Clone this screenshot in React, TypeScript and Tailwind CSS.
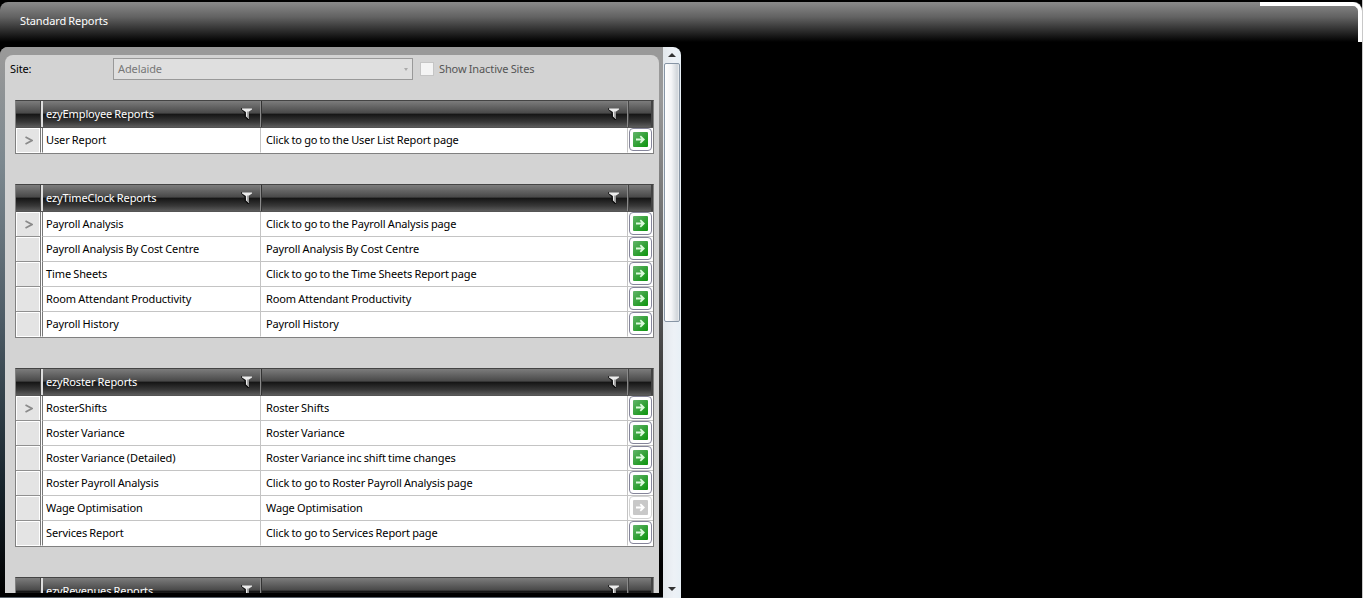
import React from "react";

type Row = { name: string; text: string; off?: boolean };
type Group = { title: string; rows: Row[] };

const groups: Group[] = [
  { title: "ezyEmployee Reports", rows: [{ name: "User Report", text: "Click to go to the User List Report page" }] },
  {
    title: "ezyTimeClock Reports",
    rows: [
      { name: "Payroll Analysis", text: "Click to go to the Payroll Analysis page" },
      { name: "Payroll Analysis By Cost Centre", text: "Payroll Analysis By Cost Centre" },
      { name: "Time Sheets", text: "Click to go to the Time Sheets Report page" },
      { name: "Room Attendant Productivity", text: "Room Attendant Productivity" },
      { name: "Payroll History", text: "Payroll History" },
    ],
  },
  {
    title: "ezyRoster Reports",
    rows: [
      { name: "RosterShifts", text: "Roster Shifts" },
      { name: "Roster Variance", text: "Roster Variance" },
      { name: "Roster Variance (Detailed)", text: "Roster Variance inc shift time changes" },
      { name: "Roster Payroll Analysis", text: "Click to go to Roster Payroll Analysis page" },
      { name: "Wage Optimisation", text: "Wage Optimisation", off: true },
      { name: "Services Report", text: "Click to go to Services Report page" },
    ],
  },
  { title: "ezyRevenues Reports", rows: [] },
];

const glossy = "bg-[linear-gradient(180deg,#7c7c7c_0%,#484848_47%,#141414_50%,#383838_80%,#5c5c5c_100%)]";

function Funnel() {
  return (
    <svg width="12" height="13" viewBox="0 0 12 13" className="shrink-0">
      <path d="M0 1.5L4 5.5v4L7.5 13V5" fill="none" stroke="#111" strokeWidth="1.2" />
      <path d="M1 1.5h10v1L8 4.5v7.5L5 9.5V5L1 2.5z" fill="#ececec" />
      <path d="M6.2 4.5H8V12L6.2 10.5z" fill="#9a9a9a" />
    </svg>
  );
}

function GoButton({ off }: { off?: boolean }) {
  return (
    <button
      className={`flex h-[23px] w-[23px] items-center justify-center rounded-[4px] border bg-white ${off ? "border-[#d2d2d2]" : "border-[#85859a]"}`}
    >
      <svg width="15" height="15" viewBox="0 0 15 15">
        <defs>
          <linearGradient id="go" x1="0" y1="0" x2="1" y2="1">
            <stop offset="0" stopColor="#62b56a" />
            <stop offset="0.5" stopColor="#36a23a" />
            <stop offset="1" stopColor="#0c960c" />
          </linearGradient>
        </defs>
        <rect width="15" height="15" rx="1" fill={off ? "#c8c8c8" : "url(#go)"} />
        <path d="M3 7.5h7.5M7.3 4.2l3.4 3.3l-3.4 3.3" fill="none" stroke={off ? "#fff" : "#dcfadc"} strokeWidth="1.8" />
      </svg>
    </button>
  );
}

function ReportTable({ group }: { group: Group }) {
  return (
    <div className="w-[639px] shrink-0 border border-[#808080] border-t-[#444]">
      <div className={`flex h-[26px] text-white ${glossy}`}>
        <div className="w-[25px] border-r border-[#444]" />
        <div className="flex w-[220px] items-center justify-between border-r border-l-2 border-r-[#8a8a8a] border-l-[#ddd] pr-[7px] pb-px pl-[3px]">
          <span className="pb-px">{group.title}</span>
          <Funnel />
        </div>
        <div className="flex w-[367px] items-center justify-end border-r border-l border-r-[#8a8a8a] border-l-[#333] pr-[7px] pb-px">
          <Funnel />
        </div>
        <div className="flex-1 border-r-2 border-l border-[#444]" />
      </div>
      <div className={group.rows.length ? "border-t border-[#555]" : ""}>
        {group.rows.map((row, i) => (
          <div key={row.name} className="group flex h-[25px] bg-white text-black">
            <div className="flex w-[25px] border-r border-b border-r-[#777] border-b-[#909090] bg-white p-px pb-0 group-last:border-b-white">
              <div className="flex flex-1 items-center justify-center bg-[#e4e4e4] pl-[2px]">
                {i === 0 && (
                  <svg width="8" height="9" viewBox="0 0 8 9">
                    <path d="M0.5 1L7 4.5L0.5 8" fill="none" stroke="#8a8a8a" strokeWidth="1.7" />
                  </svg>
                )}
              </div>
            </div>
            <div className="ml-px flex w-[219px] items-center border-r border-b border-l border-r-[#c4c4c4] border-b-[#c4c4c4] border-l-[#777] pb-px pl-[3px] group-last:border-b-white">
              {row.name}
            </div>
            <div className="flex w-[367px] items-center border-r border-b border-[#c4c4c4] pb-px pl-[5px] group-last:border-b-white">{row.text}</div>
            <div className="flex flex-1 items-start justify-center border-b border-[#c4c4c4] group-last:border-b-white">
              <GoButton off={row.off} />
            </div>
          </div>
        ))}
      </div>
    </div>
  );
}

export default function App() {
  return (
    <div className="flex h-[598px] w-[1363px] flex-col overflow-hidden border-r border-[#c8c8c8] bg-black pt-[2px] font-['Noto_Sans',sans-serif] text-[11px] leading-[15px] tracking-[-0.11px] whitespace-nowrap [word-spacing:-0.5px]">
      <header className="relative flex h-[45px] shrink-0 items-start rounded-t-[8px] bg-[linear-gradient(180deg,#8a8a8a_0px,#626262_15px,#000_40px)] pt-[11px] pl-5 text-white">
        <span>Standard Reports</span>
        <div className="absolute top-0 right-0 h-10 w-[102px] rounded-tr-[9px] border-t-4 border-r-4 border-white" />
      </header>
      <main className="flex h-[551px] w-[681px] overflow-hidden rounded-t-[8px]">
        <section className="flex w-[663px] flex-col border-b border-[#59616a] bg-[linear-gradient(180deg,#999_0%,#000_100%)]">
          <div className="h-2 bg-[#999]" />
          <div className="flex h-[538px]">
            <div className="w-[5px] bg-[linear-gradient(180deg,#999_0%,#7c888f_20%,#4c5a64_50%,#17242c_80%,#000_100%)]" />
            <div className="flex-1 bg-[linear-gradient(180deg,#999_0%,#999_8%,#000_95%)] pr-1">
              <div className="h-[538px] overflow-hidden rounded-t-[8px] bg-[#d3d3d3] pt-[3px]">
                <div className="flex h-[22px] items-center text-black">
                  <span className="w-[108px] pb-px pl-[5px]">Site:</span>
                  <div className="flex h-[22px] w-[300px] items-center justify-between border border-[#999] bg-[#dfdfdf] px-1 text-[#777]">
                    <span className="pb-px">Adelaide</span>
                    <span className="border-x-[2px] border-t-[3px] border-x-transparent border-t-[#aaa]" />
                  </div>
                  <span className="ml-[7px] h-[14px] w-[14px] border border-[#c5c5c5] bg-[#f4f4f4]" />
                  <span className="ml-[5px] pb-px text-[#555]">Show Inactive Sites</span>
                </div>
                <div className="flex flex-col gap-[30px] pt-5 pl-[10px]">
                  {groups.map((g) => (
                    <ReportTable key={g.title} group={g} />
                  ))}
                </div>
              </div>
            </div>
          </div>
          <div className="flex-1 bg-black" />
        </section>
        <aside className="flex w-[18px] flex-col items-center bg-[linear-gradient(90deg,#e3e8ec_0%,#edf1f6_60%,#e8f0f6_100%)]">
          <div className="flex h-4 items-center">
            <span className="border-x-[4px] border-b-[4px] border-x-transparent border-b-[#333]" />
          </div>
          <div className="h-[259px] w-4 rounded-[2px] border border-[#8795a5] bg-[linear-gradient(90deg,#fff_0%,#f4f5f7_45%,#d0d5da_88%,#eef1f4_100%)]" />
          <div className="flex-1" />
          <div className="flex h-[18px] items-center">
            <span className="border-x-[4px] border-t-[4px] border-x-transparent border-t-[#333]" />
          </div>
        </aside>
      </main>
    </div>
  );
}
